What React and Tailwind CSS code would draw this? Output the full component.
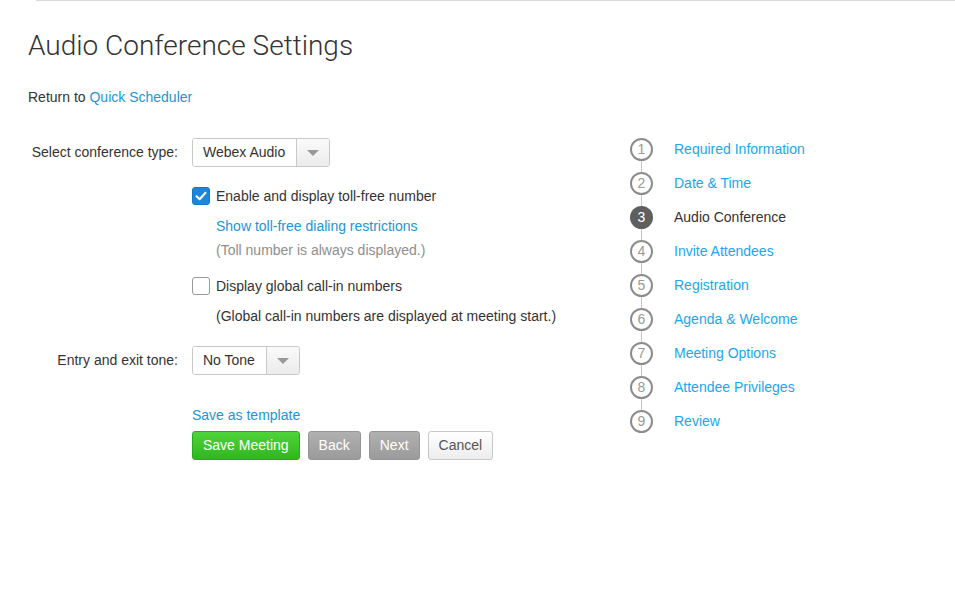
import React from 'react';

const steps = [
    'Required Information',
    'Date & Time',
    'Audio Conference',
    'Invite Attendees',
    'Registration',
    'Agenda & Welcome',
    'Meeting Options',
    'Attendee Privileges',
    'Review',
];

function Select({ value, width }) {
    return (
        <div className={`flex h-[29px] ${width} rounded-[3px] border border-[#c8c8c8] overflow-hidden`}>
            <div className="flex-1 flex items-center pl-[10px] bg-white text-[#333]">{value}</div>
            <div className="w-[33px] flex items-center justify-center border-l border-[#c8c8c8] bg-gradient-to-b from-[#fafafa] to-[#ececec]">
                <span className="w-0 h-0 border-l-[6px] border-r-[6px] border-t-[6px] border-l-transparent border-r-transparent border-t-[#999]" />
            </div>
        </div>
    );
}

function Checkbox({ checked }) {
    if (checked) {
        return (
            <span className="w-[18px] h-[18px] rounded-[3px] bg-[#1b87da] border border-[#1a78c2] flex items-center justify-center">
                <svg width="12" height="10" viewBox="0 0 12 10">
                    <path d="M1.5 5.2 L4.6 8.2 L10.5 1.8" fill="none" stroke="white" strokeWidth="2" strokeLinecap="round" strokeLinejoin="round" />
                </svg>
            </span>
        );
    }
    return <span className="w-[18px] h-[18px] rounded-[3px] bg-white border border-[#9a9a9a]" />;
}

function App() {
    return (
        <div className="min-h-[596px] bg-white text-[14px] text-[#333]" style={{ fontFamily: '"Liberation Sans", Arial, sans-serif' }}>
            <div className="ml-[36px] h-px bg-[#d9d9d9]" />
            <div className="pl-[28px]">
                <h1 className="mt-[29px] text-[28px] leading-[32px] font-light text-[#333]" style={{ fontFamily: 'Roboto, "Liberation Sans", sans-serif' }}>
                    Audio Conference Settings
                </h1>
                <p className="mt-[25px] leading-[20px]">
                    Return to <a className="text-[#1c96d4]">Quick Scheduler</a>
                </p>

                <div className="flex mt-[31px]">
                    {/* form */}
                    <div className="w-[602px]">
                        <div className="flex items-center">
                            <div className="w-[150px] text-right">Select conference type:</div>
                            <div className="ml-[14px]">
                                <Select value="Webex Audio" width="w-[138px]" />
                            </div>
                        </div>
                        <div className="ml-[164px]">
                            <label className="flex items-center gap-[6px] mt-[19px] h-[20px]">
                                <Checkbox checked />
                                <span>Enable and display toll-free number</span>
                            </label>
                            <div className="ml-[24px] mt-[10px] leading-[20px] text-[#1c96d4]">Show toll-free dialing restrictions</div>
                            <div className="ml-[24px] mt-[4px] leading-[20px] text-[#8e8e8e]">(Toll number is always displayed.)</div>
                            <label className="flex items-center gap-[6px] mt-[16px] h-[20px]">
                                <Checkbox />
                                <span>Display global call-in numbers</span>
                            </label>
                            <div className="ml-[24px] mt-[10px] leading-[20px]">(Global call-in numbers are displayed at meeting start.)</div>
                        </div>
                        <div className="flex items-center mt-[20px]">
                            <div className="w-[150px] text-right">Entry and exit tone:</div>
                            <div className="ml-[14px]">
                                <Select value="No Tone" width="w-[108px]" />
                            </div>
                        </div>
                        <div className="ml-[164px]">
                            <div className="mt-[30px] leading-[20px] text-[#1c96d4]">Save as template</div>
                            <div className="flex gap-[8px] mt-[6px]">
                                <button className="h-[29px] px-[10px] rounded-[3px] border border-[#2ba91d] bg-gradient-to-b from-[#4fd33a] to-[#2fb71f] text-white">Save Meeting</button>
                                <button className="h-[29px] px-[10px] rounded-[3px] border border-[#959595] bg-gradient-to-b from-[#b0b0b0] to-[#9b9b9b] text-white">Back</button>
                                <button className="h-[29px] px-[10px] rounded-[3px] border border-[#959595] bg-gradient-to-b from-[#b0b0b0] to-[#9b9b9b] text-white">Next</button>
                                <button className="h-[29px] px-[10px] rounded-[3px] border border-[#c8c8c8] bg-gradient-to-b from-[#ffffff] to-[#ededed] text-[#555]">Cancel</button>
                            </div>
                        </div>
                    </div>

                    {/* stepper */}
                    <div>
                        {steps.map((s, i) => {
                            const active = i === 2;
                            return (
                                <div key={s}>
                                    {i > 0 && <div className="ml-[11px] w-px h-[11px] bg-[#c4c4c4]" />}
                                    <div className="flex items-center h-[23px]">
                                        <span
                                            className={
                                                active
                                                    ? 'w-[23px] h-[23px] rounded-full bg-[#5f5f5f] text-white flex items-center justify-center text-[14px]'
                                                    : 'w-[23px] h-[23px] rounded-full border-2 border-[#8c8c8c] text-[#999] flex items-center justify-center text-[14px]'
                                            }
                                        >
                                            {i + 1}
                                        </span>
                                        <span className={active ? 'ml-[21px] text-[#333]' : 'ml-[21px] text-[#1aa7ee]'}>{s}</span>
                                    </div>
                                </div>
                            );
                        })}
                    </div>
                </div>
            </div>
        </div>
    );
}

export default App;
